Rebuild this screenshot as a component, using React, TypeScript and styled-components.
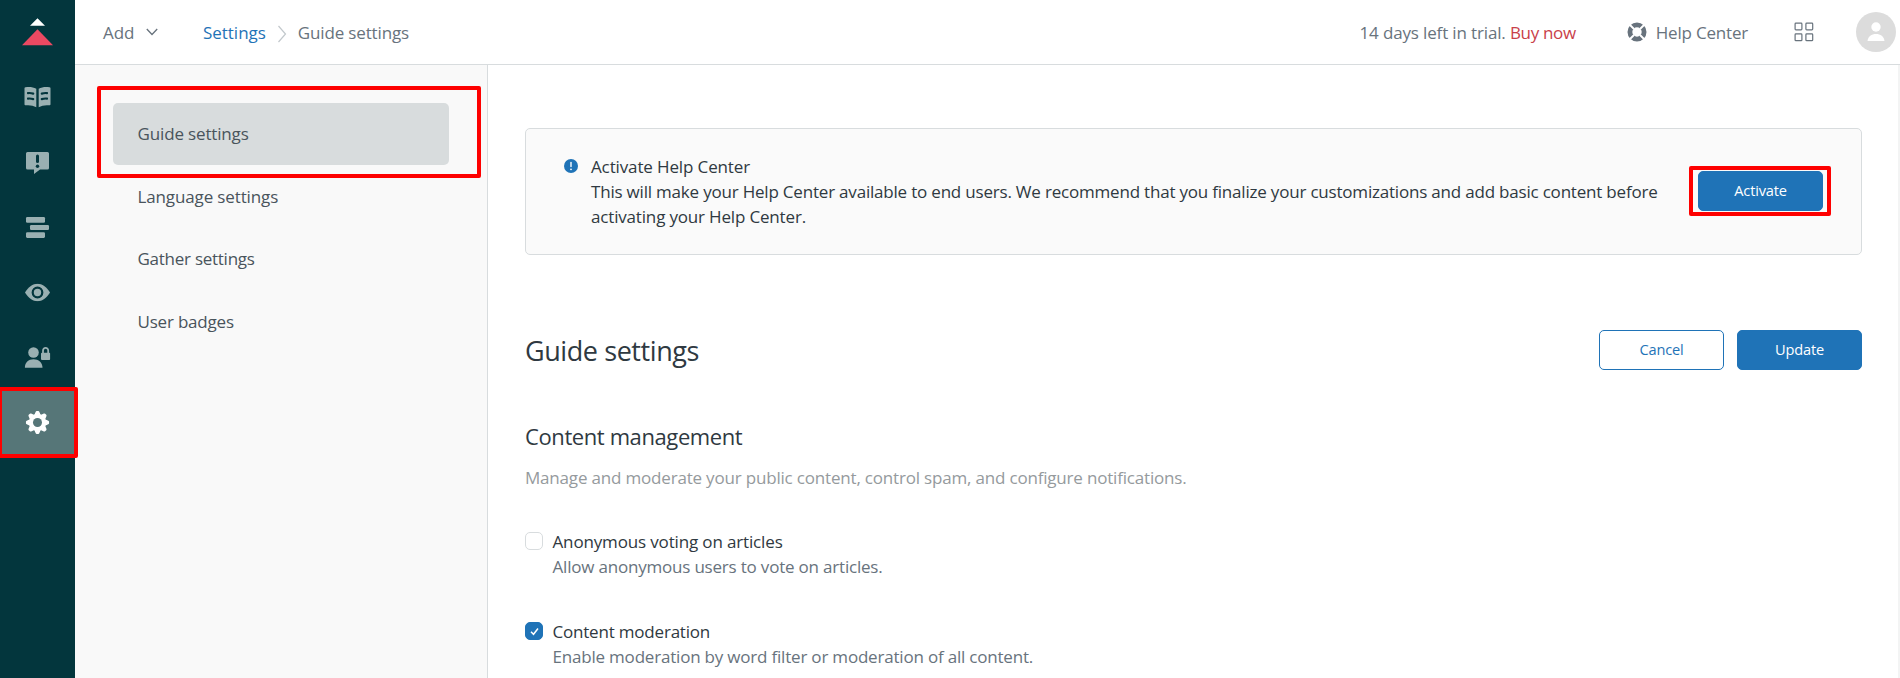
import React from "react";
import styled, { createGlobalStyle, css } from "styled-components";

const Global = createGlobalStyle`
  * { box-sizing: border-box; }
  html, body { margin: 0; height: 100%; overflow: hidden; }
  body {
    font-family: "Open Sans", "Noto Sans", sans-serif;
    font-size: 17px;
    font-weight: 380;
    line-height: 25px;
    color: #2f3941;
    background: #fff;
  }
  h1, h2, p { margin: 0; font-weight: inherit; }
  button { font: inherit; letter-spacing: inherit; }
  svg { display: block; flex: none; }
`;

const Track = styled.span<{ $t: number }>`
  letter-spacing: ${(p) => p.$t}px;
  white-space: nowrap;
`;

const Page = styled.div`
  display: flex;
  width: 1900px;
  height: 678px;
  overflow: hidden;
`;

const Rail = styled.nav`
  flex: none;
  width: 75px;
  background: #03363d;
  display: flex;
  flex-direction: column;
`;

const RailItem = styled.a<{ $active?: boolean }>`
  position: relative;
  height: 65px;
  padding: 0 1px 1px 0;
  display: flex;
  align-items: center;
  justify-content: center;
  color: ${(p) => (p.$active ? "#fff" : "#9ab0b2")};
  background: ${(p) => (p.$active ? "#567678" : "transparent")};

  svg { transform: translate(0.5px, 0.5px); }
  &:first-child svg { transform: translate(0.5px, -0.2px); }
`;

const Highlight = styled.div<{ $top: number; $right: number; $bottom: number; $left: number; $w: number }>`
  position: absolute;
  z-index: 2;
  top: ${(p) => p.$top}px;
  right: ${(p) => p.$right}px;
  bottom: ${(p) => p.$bottom}px;
  left: ${(p) => p.$left}px;
  border: ${(p) => p.$w}px solid #fe0000;
  border-radius: 2px;
  pointer-events: none;
`;

const Main = styled.div`
  flex: 1;
  min-width: 0;
  display: flex;
  flex-direction: column;
`;

const Header = styled.header`
  flex: none;
  height: 65px;
  border-bottom: 1px solid #d8dcde;
  display: flex;
  align-items: center;
  padding: 0 4px 0 28px;
  color: #68737d;
`;

const AddMenu = styled.div`
  display: flex;
  align-items: center;
  gap: 12px;
  width: 100px;
`;

const Crumbs = styled.div`
  display: flex;
  align-items: center;
  flex: 1;
  a { color: #1f73b7; }
  svg { margin: 4px 11px 0 11px; }
`;

const Trial = styled.div`
  margin-right: 51px;
  em { font-style: normal; color: #c93f4a; letter-spacing: -0.33px; }
`;

const HelpLink = styled.div`
  display: flex;
  align-items: center;
  gap: 9px;
  margin-right: 46px;
`;

const Avatar = styled.div`
  width: 40px;
  height: 40px;
  margin-left: 42px;
  border-radius: 50%;
  background: #dcdcdc;
  display: flex;
  align-items: center;
  justify-content: center;
`;

const Body = styled.div`
  flex: 1;
  display: flex;
  min-height: 0;
`;

const Sidebar = styled.aside`
  flex: none;
  width: 413px;
  padding: 38px 38px 0;
  background: #f9f9f9;
  border-right: 1px solid #d8dcde;
`;

const SideItem = styled.a<{ $active?: boolean }>`
  position: relative;
  display: flex;
  align-items: center;
  width: 336px;
  height: 62px;
  margin-bottom: 0.6px;
  padding: 0 0 1px 24.5px;
  border-radius: 5px;
  color: #49545c;
  ${(p) => p.$active && css`background: #d8dcdd;`}
`;

const Content = styled.main`
  flex: 1;
  padding: 63px 36px 0 37px;
  border-right: 2px solid #f3f4f4;
`;

const Notice = styled.section`
  display: flex;
  height: 127px;
  border: 1px solid #d8dcde;
  border-radius: 5px;
  background: #fafafa;
  padding: 25px 38px 0;
`;

const NoticeIcon = styled.div`
  width: 27px;
  padding-top: 5px;
`;

const NoticeText = styled.div`
  flex: 1;
`;

const NoticeAction = styled.div`
  position: relative;
  align-self: flex-start;
  margin-top: 17px;
`;

const Button = styled.button<{ $primary?: boolean }>`
  display: block;
  width: 125px;
  height: 40px;
  padding: 0 0 1px;
  border: 1px solid #1f73b7;
  border-radius: 5px;
  font-size: 14.6px;
  letter-spacing: -0.2px;
  color: ${(p) => (p.$primary ? "#fff" : "#1f73b7")};
  background: ${(p) => (p.$primary ? "#1f73b7" : "#fff")};
`;

const TitleRow = styled.div`
  display: flex;
  align-items: center;
  gap: 13px;
  margin-top: 75px;
  height: 40px;
`;

const Title = styled.h1`
  flex: 1;
  font-size: 27px;
  line-height: 40px;
  padding-top: 2px;
`;

const Subtitle = styled.h2`
  margin-top: 51px;
  font-size: 22px;
  line-height: 30px;
`;

const Lead = styled.p`
  margin: 14px 0 39px;
  color: #959a9d;
`;

const Option = styled.label`
  display: flex;
  gap: 9.5px;
  height: 90px;
`;

const Box = styled.span<{ $checked?: boolean }>`
  width: 18px;
  height: 18px;
  margin-top: 3px;
  border: 1px solid ${(p) => (p.$checked ? "#1f73b7" : "#d8dcde")};
  border-radius: 5px;
  background: ${(p) => (p.$checked ? "#1f73b7" : "#fff")};
  display: flex;
  align-items: center;
  justify-content: center;
`;

const Hint = styled.div`
  color: #68737d;
`;

const Logo = () => (
  <svg width="32" height="30" viewBox="0 0 32 30">
    <path d="M16 1.500 23.500 9h-15z" fill="#fff" />
    <path d="M16 12.500 31.500 28.500H.5z" fill="#eb4962" />
  </svg>
);

const BookIcon = () => (
  <svg width="28" height="24" viewBox="0 0 28 24" fill="currentColor">
    <path d="M2 1.800C6 1 9.500 1.600 12.800 3.200v18.600C9.800 20 6 19.300 2.200 19.800A1 1 0 0 1 1 18.800V2.800A1 1 0 0 1 2 1.800zM26 1.800C22 1 18.500 1.600 15.200 3.200v18.600c3-1.800 6.800-2.500 10.600-2A1 1 0 0 0 27 18.800V2.800A1 1 0 0 0 26 1.800z" />
    <path d="M4.500 7.600c1.800-.2 3.600 0 5.200.5M4.500 13.100c1.800-.2 3.600 0 5.200.5M23.500 7.600c-1.800-.2-3.600 0-5.200.5M23.500 13.100c-1.800-.2-3.600 0-5.200.5" stroke="#03363d" strokeWidth="2.200" strokeLinecap="round" fill="none" />
  </svg>
);

const FeedbackIcon = () => (
  <svg width="24" height="24" viewBox="0 0 24 24">
    <path d="M2 1.500h20a1.500 1.500 0 0 1 1.500 1.500v14.500A1.500 1.500 0 0 1 22 19h-7.500L8.500 23.500V19H2A1.500 1.500 0 0 1 .5 17.500V3A1.500 1.500 0 0 1 2 1.500z" fill="currentColor" />
    <path d="M12 5.500v5.500" stroke="#03363d" strokeWidth="3" strokeLinecap="round" />
    <circle cx="12" cy="15.700" r="1.700" fill="#03363d" />
  </svg>
);

const ListIcon = () => (
  <svg width="24" height="22" viewBox="0 0 24 22" fill="currentColor">
    <rect x="0.500" y="0.500" width="19" height="5.700" rx="1.300" />
    <rect x="4.500" y="8.400" width="19" height="5.200" rx="1.300" />
    <rect x="0.500" y="15.700" width="19" height="5.700" rx="1.300" />
  </svg>
);

const EyeIcon = () => (
  <svg width="26" height="18" viewBox="0 0 26 18">
    <path d="M.5 9C4 3.200 8.300.3 13 .3S22 3.200 25.500 9C22 14.800 17.700 17.700 13 17.700S4 14.800.5 9z" fill="currentColor" />
    <circle cx="13" cy="9" r="4.800" fill="none" stroke="#03363d" strokeWidth="2.200" />
  </svg>
);

const UserLockIcon = () => (
  <svg width="26" height="22" viewBox="0 0 26 22" fill="currentColor">
    <circle cx="9" cy="6" r="5.300" />
    <path d="M.3 21.200C.3 16 4 12.700 9 12.700s9 3.300 9 8.500z" />
    <rect x="16.500" y="6.300" width="9.200" height="7.200" rx="1" />
    <path d="M18.500 7V4.200a2.600 2.800 0 0 1 5.200 0V7" fill="none" stroke="currentColor" strokeWidth="1.800" />
  </svg>
);

const GearIcon = () => (
  <svg width="24" height="24" viewBox="-12 -12 24 24">
    {[0, 45, 90, 135, 180, 225, 270, 315].map((a) => (
      <path key={a} d="M-3.200-7.500-1.800-10.800Q-1.500-11.600-.8-11.600H.8Q1.500-11.600 1.800-10.800L3.200-7.500z" fill="currentColor" transform={`rotate(${a})`} />
    ))}
    <circle r="8.500" fill="currentColor" />
    <circle r="4.500" fill="#567678" />
  </svg>
);

const LifebuoyIcon = () => (
  <svg width="20" height="20" viewBox="-10 -10 20 20">
    <circle r="7.100" fill="none" stroke="#68737d" strokeWidth="4.800" />
    <path d="M-8-8-3-3M8-8 3-3M8 8 3 3M-8 8l5-5" stroke="#fff" strokeWidth="1.900" />
  </svg>
);

const GridIcon = () => (
  <svg width="20" height="20" viewBox="0 0 20 20" fill="none" stroke="#68737d" strokeWidth="1.200">
    <rect x="1.100" y="1.100" width="6.800" height="6.800" rx="0.800" />
    <rect x="11.900" y="1.100" width="6.800" height="6.800" rx="0.800" />
    <rect x="1.100" y="11.900" width="6.800" height="6.800" rx="0.800" />
    <rect x="11.900" y="11.900" width="6.800" height="6.800" rx="0.800" />
  </svg>
);

const options = [
  { label: "Anonymous voting on articles", lt: -0.15, hint: "Allow anonymous users to vote on articles.", ht: -0.2, checked: false },
  { label: "Content moderation", lt: -0.2, hint: "Enable moderation by word filter or moderation of all content.", ht: -0.2, checked: true },
];

export default function App() {
  return (
    <>
      <Global />
      <Page>
        <Rail>
          <RailItem><Logo /></RailItem>
          <RailItem><BookIcon /></RailItem>
          <RailItem><FeedbackIcon /></RailItem>
          <RailItem><ListIcon /></RailItem>
          <RailItem><EyeIcon /></RailItem>
          <RailItem><UserLockIcon /></RailItem>
          <RailItem $active>
            <GearIcon />
            <Highlight $top={-3} $right={-3} $bottom={-3} $left={-2} $w={4} />
          </RailItem>
        </Rail>
        <Main>
          <Header>
            <AddMenu>
              <Track $t={-0.1}>Add</Track>
              <svg width="12" height="8" viewBox="0 0 12 8" fill="none" stroke="#68737d" strokeWidth="1.300">
                <path d="M.8 1 6 6.500 11.200 1" />
              </svg>
            </AddMenu>
            <Crumbs>
              <a><Track $t={-0.03}>Settings</Track></a>
              <svg width="10" height="18" viewBox="0 0 10 18" fill="none" stroke="#c2c8cc" strokeWidth="1.200">
                <path d="M1.500 1 8.500 9 1.500 17" />
              </svg>
              <Track $t={-0.15}>Guide settings</Track>
            </Crumbs>
            <Trial><Track $t={-0.15}>14 days left in trial. <em>Buy now</em></Track></Trial>
            <HelpLink><LifebuoyIcon /><Track $t={-0.2}>Help Center</Track></HelpLink>
            <GridIcon />
            <Avatar>
              <svg width="18" height="20" viewBox="0 0 18 20" fill="#fff">
                <circle cx="9" cy="5" r="4.700" />
                <path d="M.5 19C1 14.500 4.500 12 9 12s8 2.500 8.500 7z" />
              </svg>
            </Avatar>
          </Header>
          <Body>
            <Sidebar>
              <SideItem $active>
                <Track $t={-0.15}>Guide settings</Track>
                <Highlight $top={-17} $right={-32} $bottom={-13} $left={-16} $w={4} />
              </SideItem>
              <SideItem><Track $t={-0.13}>Language settings</Track></SideItem>
              <SideItem><Track $t={-0.26}>Gather settings</Track></SideItem>
              <SideItem><Track $t={-0.2}>User badges</Track></SideItem>
            </Sidebar>
            <Content>
              <Notice>
                <NoticeIcon>
                  <svg width="14" height="14" viewBox="0 0 14 14">
                    <circle cx="7" cy="7" r="7" fill="#1f73b7" />
                    <path d="M7 3.500v4" stroke="#fff" strokeWidth="1.400" strokeLinecap="round" />
                    <circle cx="7" cy="10.300" r="0.900" fill="#fff" />
                  </svg>
                </NoticeIcon>
                <NoticeText>
                  <p><Track $t={-0.13}>Activate Help Center</Track></p>
                  <p><Track $t={-0.2}>This will make your Help Center available to end users. We recommend that you finalize your customizations and add basic content before</Track></p>
                  <p><Track $t={-0.17}>activating your Help Center.</Track></p>
                </NoticeText>
                <NoticeAction>
                  <Button $primary>Activate</Button>
                  <Highlight $top={-5} $right={-8} $bottom={-5} $left={-9} $w={4} />
                </NoticeAction>
              </Notice>
              <TitleRow>
                <Title><Track $t={-0.42}>Guide settings</Track></Title>
                <Button>Cancel</Button>
                <Button $primary>Update</Button>
              </TitleRow>
              <Subtitle><Track $t={-0.4}>Content management</Track></Subtitle>
              <Lead><Track $t={-0.185}>Manage and moderate your public content, control spam, and configure notifications.</Track></Lead>
              {options.map((o) => (
                <Option key={o.label}>
                  <Box $checked={o.checked}>
                    {o.checked && (
                      <svg width="9" height="9" viewBox="0 0 9 9" fill="none" stroke="#fff" strokeWidth="1.500">
                        <path d="M1 4.800 3.500 7.300 8 1.500" />
                      </svg>
                    )}
                  </Box>
                  <div>
                    <div><Track $t={o.lt}>{o.label}</Track></div>
                    <Hint><Track $t={o.ht}>{o.hint}</Track></Hint>
                  </div>
                </Option>
              ))}
            </Content>
          </Body>
        </Main>
      </Page>
    </>
  );
}
